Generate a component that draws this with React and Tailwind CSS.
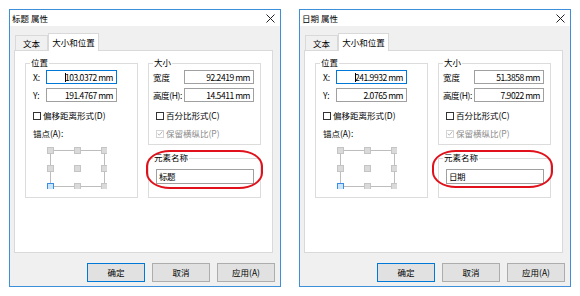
import React from "react";

function Check({ checked, disabled }) {
  return (
    <span
      className={`w-[8px] h-[8px] border ${
        disabled ? "border-[#d4d4d4]" : "border-[#333333]"
      } bg-white flex items-center justify-center shrink-0`}
    >
      {checked && (
        <svg width="7" height="7" viewBox="0 0 7 7">
          <path d="M0.8 3.6 L2.7 5.4 L6.2 1.2" stroke="#a8a8a8" fill="none" strokeWidth="1" />
        </svg>
      )}
    </span>
  );
}

function Field({ value, w, h = 14, focused, left }) {
  return (
    <div
      className={`bg-white border ${
        focused ? "border-[#0078d7]" : "border-[#a0a0a0]"
      } flex items-center ${left ? "justify-start pl-[2px]" : "justify-end pr-[3px]"} leading-[11px] tracking-[-0.45px] whitespace-nowrap`}
      style={{ width: w, height: h }}
    >
      {focused && <span className="inline-block w-px h-[9px] bg-black mr-[-1px]" />}
      <span>{value}</span>
    </div>
  );
}

function Group({ label, className, children }) {
  return (
    <div className={`relative border border-[#dcdcdc] ${className}`}>
      <span className="absolute -top-[7px] left-[4px] px-[1px] bg-white leading-[11px] whitespace-nowrap">
        {label}
      </span>
      {children}
    </div>
  );
}

function Anchor() {
  const xs = [3, 30, 57];
  const ys = [3, 21, 39];
  return (
    <svg width="60" height="42" viewBox="0 0 60 42" className="block">
      <rect x="3.5" y="3.5" width="54" height="36" fill="none" stroke="#bdbdbd" strokeWidth="1" />
      {ys.map((cy, r) =>
        xs.map((cx, c) => {
          const sel = r === 2 && c === 0;
          return (
            <rect
              key={`${r}-${c}`}
              x={cx - 3 + 0.5}
              y={cy - 3 + 0.5}
              width="6"
              height="6"
              fill={sel ? "#cde5f8" : "#dadada"}
              stroke={sel ? "#3a8ee6" : "#c4c4c4"}
              strokeWidth="1"
            />
          );
        })
      )}
    </svg>
  );
}

function Button({ children, primary }) {
  return (
    <div
      className={`w-[58px] h-[19px] bg-[#e1e1e1] border ${
        primary ? "border-[#0078d7]" : "border-[#adadad]"
      } flex items-center justify-center leading-[11px]`}
    >
      {children}
    </div>
  );
}

function Dialog({ title, x, y, w, h, name, ell }) {
  return (
    <div className="w-[272px] h-[278px] border border-[#3c8fd8] flex flex-col bg-[#f0f0f0] shrink-0">
      <div className="h-[16px] bg-white flex items-center justify-between pl-[2px] pr-[5px]">
        <span className="leading-[11px]">{title}</span>
        <svg width="9" height="9" viewBox="0 0 9 9">
          <path d="M0.5 0.5 L8.5 8.5 M8.5 0.5 L0.5 8.5" stroke="#222" strokeWidth="1" />
        </svg>
      </div>
      <div className="flex-1 flex flex-col pl-[4px] pr-[5px] pt-[7px]">
        <div className="flex items-end h-[17px] pl-[1px]">
          <div className="w-[33px] h-[15px] border border-b-0 border-[#d9d9d9] flex items-center justify-center leading-[11px]">
            文本
          </div>
          <div className="w-[51px] h-[18px] -mb-px relative z-10 bg-white border border-b-0 border-[#d9d9d9] flex items-center justify-center leading-[11px] whitespace-nowrap">
            大小和位置
          </div>
        </div>
        <div className="w-[259px] h-[203px] border border-[#d9d9d9] bg-white pl-[10px] pt-[12px] flex gap-[10px]">
          <Group label="位置" className="w-[113px] h-[135px] pt-[6px] pl-[7px]">
            <div className="flex items-center h-[14px]">
              <span className="w-[13px] leading-[11px]">X:</span>
              <Field value={x} w={71} focused />
            </div>
            <div className="flex items-center h-[14px] mt-[4px]">
              <span className="w-[13px] leading-[11px]">Y:</span>
              <Field value={y} w={71} />
            </div>
            <div className="flex items-center gap-[2px] h-[11px] mt-[8px] leading-[11px] whitespace-nowrap">
              <Check />
              <span>偏移距离形式(D)</span>
            </div>
            <div className="h-[11px] mt-[7px] leading-[11px]">锚点(A):</div>
            <div className="mt-[8px] ml-[14px]">
              <Anchor />
            </div>
          </Group>
          <div className="relative w-[113px] flex flex-col">
            <Group label="大小" className="h-[82px] pt-[6px] pl-[4px]">
              <div className="flex items-center h-[14px]">
                <span className="w-[31px] leading-[11px] whitespace-nowrap">宽度</span>
                <Field value={w} w={70} />
              </div>
              <div className="flex items-center h-[14px] mt-[4px]">
                <span className="w-[31px] leading-[11px] whitespace-nowrap tracking-[-0.4px]">高度(H):</span>
                <Field value={h} w={70} />
              </div>
              <div className="flex items-center gap-[2px] h-[11px] mt-[8px] pl-[3px] leading-[11px] whitespace-nowrap">
                <Check />
                <span>百分比形式(C)</span>
              </div>
              <div className="flex items-center gap-[2px] h-[11px] mt-[7px] pl-[3px] leading-[11px] whitespace-nowrap text-[#8a8a8a]">
                <Check checked disabled />
                <span>保留横纵比(P)</span>
              </div>
            </Group>
            <Group label="元素名称" className="h-[40px] mt-[13px] pt-[10px] pl-[7px]">
              <Field value={name} w={98} h={15} left />
            </Group>
            <div
              className="absolute top-[87px] border-2 border-[#e0111b] rounded-[24px/16px] pointer-events-none"
              style={{ left: ell.l, width: ell.w, height: ell.h }}
            />
          </div>
        </div>
        <div className="flex justify-end gap-[7px] mt-[10px]">
          <Button primary>确定</Button>
          <Button>取消</Button>
          <Button>应用(A)</Button>
        </div>
      </div>
    </div>
  );
}

export default function App() {
  return (
    <div className="w-[580px] h-[296px] bg-white pt-[9px] pl-[9px] flex gap-[18px] text-[8.5px] text-black font-['Noto_Sans_CJK_SC','Noto_Sans',sans-serif] overflow-hidden">
      <Dialog
        title="标题 属性"
        x="103.0372 mm"
        y="191.4767 mm"
        w="92.2419 mm"
        h="14.5411 mm"
        name="标题"
        ell={{ l: -2, w: 117, h: 39 }}
      />
      <Dialog
        title="日期 属性"
        x="241.9932 mm"
        y="2.0765 mm"
        w="51.3858 mm"
        h="7.9022 mm"
        name="日期"
        ell={{ l: -6, w: 121, h: 38 }}
      />
    </div>
  );
}
